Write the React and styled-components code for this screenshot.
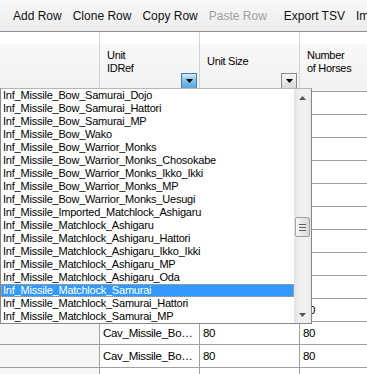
import React from "react";
import styled, { createGlobalStyle } from "styled-components";

const GlobalStyle = createGlobalStyle`
  html, body {
    margin: 0;
    padding: 0;
    background: #fff;
  }
  body {
    font-family: "Liberation Sans", Arial, sans-serif;
    overflow: hidden;
  }
`;

const Window = styled.div`
  width: 367px;
  height: 374px;
  overflow: hidden;
  display: flex;
  flex-direction: column;
  background: #fff;
`;

const Toolbar = styled.div`
  height: 31px;
  flex: none;
  display: flex;
  align-items: center;
  padding-left: 3px;
  background: linear-gradient(#f8f8f8, #ececec);
  border-bottom: 1px solid #8e8e8e;
  white-space: nowrap;
  overflow: hidden;
  font-size: 12px;
`;

const Grip = styled.div`
  width: 2px;
  height: 20px;
  margin-right: 5px;
  background: repeating-linear-gradient(
    to bottom,
    #a5a5a5 0 2px,
    transparent 2px 4px
  );
`;

const ToolButton = styled.span`
  padding: 0 5px;
  margin-right: 1px;
  color: ${(p) => (p.$disabled ? "#a0a0a0" : "#111")};
`;

const Separator = styled.div`
  width: 1px;
  height: 18px;
  margin: 0 3px 0 3px;
  background: #c4c4c4;
`;

const Grid = styled.div`
  position: relative;
  flex: 1;
  overflow: hidden;
`;

const HeaderRow = styled.div`
  display: flex;
  height: 60px;
`;

const HeaderCell = styled.div`
  width: 100px;
  flex: none;
  box-sizing: border-box;
  display: flex;
  align-items: center;
  padding-left: 7px;
  border-right: 1px solid #d3d3d3;
  border-bottom: 1px solid #a0a0a0;
  background: linear-gradient(#ffffff 0, #ffffff 11px, #f8f8f8 12px, #f2f2f2 100%);
  font-size: 11px;
  letter-spacing: -0.3px;
  line-height: 13px;
  color: #000;
`;

const HeaderText = styled.span`
  white-space: pre-line;
`;

const DropButton = styled.div`
  width: 16px;
  height: 16px;
  box-sizing: border-box;
  align-self: flex-end;
  margin: 0 2px 2px auto;
  display: flex;
  align-items: center;
  justify-content: center;
  border: 1px solid ${(p) => (p.$active ? "#3c7fb1" : "#8a8a8a")};
  background: ${(p) =>
    p.$active
      ? "linear-gradient(#d6ecfa, #7fbde8 50%, #5aa6de)"
      : "linear-gradient(#f4f4f4, #dadada)"};
`;

const Row = styled.div`
  display: flex;
  height: 23px;
`;

const Cell = styled.div`
  width: 100px;
  flex: none;
  box-sizing: border-box;
  padding-left: 3px;
  border-right: 1px solid #a0a0a0;
  border-bottom: 1px solid #a0a0a0;
  background: ${(p) => (p.$head ? "#f6f6f6" : "#fff")};
  font-size: 11.5px;
  letter-spacing: -0.3px;
  line-height: 22px;
  white-space: nowrap;
  overflow: hidden;
  text-overflow: ellipsis;
  color: #000;
`;

const Popup = styled.div`
  position: absolute;
  left: 0;
  top: 56px;
  width: 312px;
  height: 236px;
  box-sizing: border-box;
  display: flex;
  border: 1px solid #828790;
  border-top-color: #b5b5b5;
  background: #fff;
  z-index: 2;
`;

const ItemList = styled.div`
  flex: 1;
  display: flex;
  flex-direction: column;
  overflow: hidden;
`;

const Item = styled.div`
  height: 13px;
  line-height: 13px;
  padding-left: 2px;
  font-size: 11px;
  letter-spacing: -0.22px;
  white-space: nowrap;
  color: ${(p) => (p.$selected ? "#fff" : "#000")};
  background: ${(p) => (p.$selected ? "#3399ff" : "transparent")};
  outline: ${(p) => (p.$selected ? "1px dotted #d9a05a" : "none")};
  outline-offset: -1px;
`;

const Scrollbar = styled.div`
  width: 17px;
  flex: none;
  display: flex;
  flex-direction: column;
  background: linear-gradient(to right, #e2e2e2, #efefef 30%, #f2f2f2 80%, #e8e8e8);
`;

const ArrowBox = styled.div`
  height: 17px;
  flex: none;
  display: flex;
  align-items: center;
  justify-content: center;
`;

const Track = styled.div`
  flex: 1;
  display: flex;
  flex-direction: column;
  align-items: center;
`;

const Thumb = styled.div`
  width: 15px;
  height: 20px;
  box-sizing: border-box;
  margin-top: ${(p) => p.$offset}px;
  border: 1px solid #a2a2a2;
  border-radius: 2px;
  background: linear-gradient(to right, #f6f6f6, #e4e4e4 60%, #d6d6d6);
  display: flex;
  align-items: center;
  justify-content: center;
`;

const ThumbGrip = styled.div`
  width: 7px;
  height: 7px;
  background: repeating-linear-gradient(
    to bottom,
    #5e5e5e 0 1px,
    #ececec 1px 2px,
    transparent 2px 3px
  );
`;

const Triangle = ({ down, color = "#000", w = 7, h = 4 }) => (
  <svg width={w} height={h} viewBox={`0 0 ${w} ${h}`}>
    <polygon
      points={down ? `0,0 ${w},0 ${w / 2},${h}` : `0,${h} ${w},${h} ${w / 2},0`}
      fill={color}
    />
  </svg>
);

const items = [
  "Inf_Missile_Bow_Samurai_Dojo",
  "Inf_Missile_Bow_Samurai_Hattori",
  "Inf_Missile_Bow_Samurai_MP",
  "Inf_Missile_Bow_Wako",
  "Inf_Missile_Bow_Warrior_Monks",
  "Inf_Missile_Bow_Warrior_Monks_Chosokabe",
  "Inf_Missile_Bow_Warrior_Monks_Ikko_Ikki",
  "Inf_Missile_Bow_Warrior_Monks_MP",
  "Inf_Missile_Bow_Warrior_Monks_Uesugi",
  "Inf_Missile_Imported_Matchlock_Ashigaru",
  "Inf_Missile_Matchlock_Ashigaru",
  "Inf_Missile_Matchlock_Ashigaru_Hattori",
  "Inf_Missile_Matchlock_Ashigaru_Ikko_Ikki",
  "Inf_Missile_Matchlock_Ashigaru_MP",
  "Inf_Missile_Matchlock_Ashigaru_Oda",
  "Inf_Missile_Matchlock_Samurai",
  "Inf_Missile_Matchlock_Samurai_Hattori",
  "Inf_Missile_Matchlock_Samurai_MP",
];

const rows = [
  ...Array.from({ length: 9 }, () => ["", "", ""]),
  ["", "", "80"],
  ["Cav_Missile_Bow_Samurai_Hattori", "80", "80"],
  ["Cav_Missile_Bow_Samurai_MP", "80", "80"],
  ["", "", ""],
];

const tools = ["Add Row", "Clone Row", "Copy Row"];

export default function App() {
  return (
    <Window>
      <GlobalStyle />
      <Toolbar>
        <Grip />
        {tools.map((t) => (
          <ToolButton key={t}>{t}</ToolButton>
        ))}
        <ToolButton $disabled>Paste Row</ToolButton>
        <Separator />
        <ToolButton>Export TSV</ToolButton>
        <ToolButton>Import TSV</ToolButton>
      </Toolbar>
      <Grid>
        <HeaderRow>
          <HeaderCell />
          <HeaderCell>
            <HeaderText>{"Unit\nIDRef"}</HeaderText>
            <DropButton $active>
              <Triangle down />
            </DropButton>
          </HeaderCell>
          <HeaderCell>
            <HeaderText>Unit Size</HeaderText>
            <DropButton>
              <Triangle down />
            </DropButton>
          </HeaderCell>
          <HeaderCell>
            <HeaderText>{"Number\nof Horses"}</HeaderText>
          </HeaderCell>
        </HeaderRow>
        {rows.map((r, i) => (
          <Row key={i}>
            <Cell $head />
            <Cell>{r[0]}</Cell>
            <Cell>{r[1]}</Cell>
            <Cell>{r[2]}</Cell>
          </Row>
        ))}
        <Popup>
          <ItemList>
            {items.map((it) => (
              <Item key={it} $selected={it === "Inf_Missile_Matchlock_Samurai"}>
                {it}
              </Item>
            ))}
          </ItemList>
          <Scrollbar>
            <ArrowBox>
              <Triangle color="#555" />
            </ArrowBox>
            <Track>
              <Thumb $offset={111}>
                <ThumbGrip />
              </Thumb>
            </Track>
            <ArrowBox>
              <Triangle down color="#555" />
            </ArrowBox>
          </Scrollbar>
        </Popup>
      </Grid>
    </Window>
  );
}
